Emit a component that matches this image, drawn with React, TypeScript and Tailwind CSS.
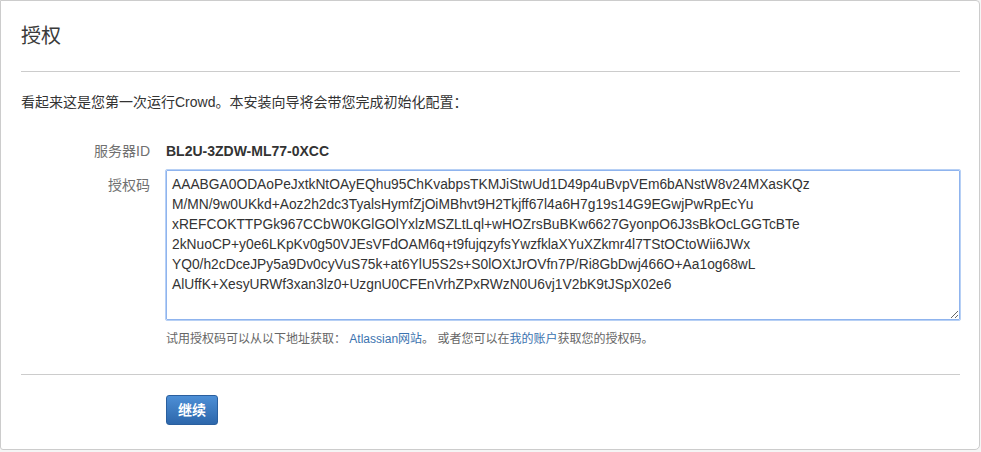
const licenseKey = [
  "AAABGA0ODAoPeJxtkNtOAyEQhu95ChKvabpsTKMJiStwUd1D49p4uBvpVEm6bANstW8v24MXasKQz",
  "M/MN/9w0UKkd+Aoz2h2dc3TyalsHymfZjOiMBhvt9H2Tkjff67l4a6H7g19s14G9EGwjPwRpEcYu",
  "xREFCOKTTPGk967CCbW0KGlGOlYxlzMSZLtLql+wHOZrsBuBKw6627GyonpO6J3sBkOcLGGTcBTe",
  "2kNuoCP+y0e6LKpKv0g50VJEsVFdOAM6q+t9fujqzyfsYwzfklaXYuXZkmr4l7TStOCtoWii6JWx",
  "YQ0/h2cDceJPy5a9Dv0cyVuS75k+at6YlU5S2s+S0lOXtJrOVfn7P/Ri8GbDwj466O+Aa1og68wL",
  "AlUffK+XesyURWf3xan3lz0+UzgnU0CFEnVrhZPxRWzN0U6vj1V2bK9tJSpX02e6",
].join("\n");

const font = "font-['Liberation_Sans','Noto_Sans_CJK_SC',sans-serif]";

export default function App() {
  return (
    <div className={`min-h-[452px] w-[981px] bg-[#f5f5f5] ${font} text-[#333]`}>
      <div className="w-[980px] h-[450px] bg-white border border-[#cccccc] rounded-tr-[4px] rounded-br-[5px] rounded-bl-[3px] pl-[20px] pr-[19px] pt-[21px]">
        <h1 className="text-[20px] leading-[28px] font-normal text-[#3a3a3a]">授权</h1>
        <hr className="mt-[21px] border-0 border-t border-[#cccccc]" />
        <p className="mt-[20px] text-[14px] leading-[20px]">
          看起来这是您第一次运行Crowd。本安装向导将会带您完成初始化配置：
        </p>

        <div className="mt-[29px] flex items-center gap-[16px] text-[14px] leading-[20px]">
          <div className="w-[129px] text-right text-[#707070]">服务器ID</div>
          <div className="font-bold">BL2U-3ZDW-ML77-0XCC</div>
        </div>

        <div className="mt-[9px] flex gap-[16px]">
          <div className="w-[129px] pt-[5px] text-right text-[14px] leading-[20px] text-[#707070]">授权码</div>
          <div className="flex-1">
            <textarea
              defaultValue={licenseKey}
              spellCheck={false}
              className={`block w-full h-[150px] border border-[#8fb4ee] outline outline-1 outline-[#b7d0f5] rounded-[1px] px-[5px] py-[4px] text-[13.8px] leading-[20px] text-[#333] whitespace-pre ${font}`}
            />
            <p className="mt-[10px] text-[12px] leading-[18px] text-[#666]">
              试用授权码可以从以下地址获取：{" "}
              <a href="#" className="text-[#3b73af]">Atlassian网站</a>。{" "}
              或者您可以在<a href="#" className="text-[#3b73af]">我的账户</a>获取您的授权码。
            </p>
          </div>
        </div>

        <hr className="mt-[26px] border-0 border-t border-[#cccccc]" />

        <div className="mt-[20px] pl-[145px]">
          <button className="h-[30px] w-[52px] rounded-[3px] border border-[#2a5f9e] bg-gradient-to-b from-[#4d8fd6] to-[#2d67ab] text-[14px] font-bold text-white">
            继续
          </button>
        </div>
      </div>
    </div>
  );
}
